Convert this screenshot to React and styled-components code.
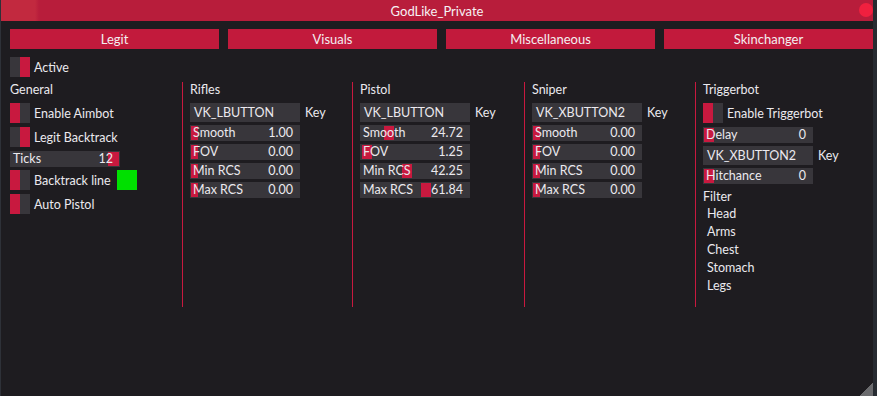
import React from 'react';
import styled, { createGlobalStyle } from 'styled-components';

const GlobalStyle = createGlobalStyle`
  html, body {
    margin: 0;
    padding: 0;
    background: #272b31;
    overflow: hidden;
  }
  * {
    box-sizing: border-box;
  }
`;

const RED = '#c8193f';
const FRAME = '#38363b';

// Window shell
const Window = styled.div`
  position: relative;
  width: 873px;
  height: 100vh;
  background: #1e1c20;
  border-left: 1px solid #2e3138;
  font-family: "Lato", "Open Sans", sans-serif;
  font-size: 12.5px;
  color: #ebe9ee;
  display: flex;
  flex-direction: column;
`;

const TitleBar = styled.div`
  height: 21px;
  flex: none;
  position: relative;
  display: flex;
  align-items: center;
  justify-content: center;
  background: linear-gradient(90deg, #c2293f 0px, #c2293f 34px, #b81d3b 38px, #b81d3b 100%);
  color: #f6f2f4;
  font-size: 13px;
`;

const CloseDot = styled.span`
  position: absolute;
  right: 0px;
  top: 3px;
  width: 14px;
  height: 14px;
  border-radius: 50%;
  background: #f0203f;
`;

const Body = styled.div`
  padding: 8px 0 0 9px;
  display: flex;
  flex-direction: column;
`;

const TabRow = styled.div`
  display: grid;
  grid-template-columns: repeat(4, 209px);
  column-gap: 9px;
`;

const Tab = styled.div`
  height: 20px;
  background: #c21a3c;
  color: #f4eef0;
  font-size: 13px;
  display: flex;
  align-items: center;
  justify-content: center;
`;

const Columns = styled.div`
  display: flex;
  margin-top: 5px;
`;

const Column = styled.div`
  width: ${p => p.$w}px;
  flex: none;
  display: flex;
  flex-direction: column;
  padding-left: ${p => (p.$line ? 7 : 0)}px;
  border-left: ${p => (p.$line ? `1px solid ${RED}` : 'none')};
  height: ${p => (p.$line ? '225px' : 'auto')};
  align-self: flex-start;
`;

const Header = styled.div`
  line-height: 15px;
  height: 16px;
  margin-bottom: 5px;
`;

const CheckRow = styled.div`
  display: flex;
  align-items: center;
  height: 20px;
  margin-bottom: ${p => p.$mb ?? 4}px;
`;

const Toggle = styled.div`
  width: 20px;
  height: 20px;
  flex: none;
  display: flex;
  background: ${FRAME};
  margin-right: 4px;

  &::before {
    content: '';
    width: 10px;
    height: 100%;
    background: ${RED};
    margin-left: ${p => (p.$on ? '10px' : '0')};
  }
`;

const ColorSwatch = styled.div`
  width: 20px;
  height: 20px;
  background: #00e000;
  margin-left: 6px;
`;

const Slider = styled.div`
  position: relative;
  width: 110px;
  height: 16px;
  margin-bottom: 3px;
  background: ${FRAME};
  display: flex;
  align-items: center;
  justify-content: space-between;
  padding: 0 7px 0 3px;
  line-height: 16px;
  flex: none;
`;

const Grab = styled.div`
  position: absolute;
  top: 1px;
  bottom: 1px;
  width: ${p => p.$w}px;
  background: ${RED};
`;

const SliderText = styled.span`
  position: relative;
`;

const KeyRow = styled.div`
  display: flex;
  align-items: center;
  margin-bottom: 3px;
`;

const KeyBox = styled.div`
  width: 110px;
  height: 19px;
  background: ${FRAME};
  padding-left: 4px;
  display: flex;
  align-items: center;
`;

const KeyLabel = styled.span`
  margin-left: 5px;
`;

const FilterTitle = styled.div`
  line-height: 17px;
  margin-top: 1px;
`;

const FilterItem = styled.div`
  line-height: 18px;
  padding-left: 4px;
`;

const ResizeGrip = styled.div`
  position: absolute;
  right: 0;
  bottom: 0;
  width: 14px;
  height: 14px;
  background: linear-gradient(135deg, transparent 50%, #6b6b6e 50%);
`;

const SliderField = ({ label, value, pos, w = 10 }) => (
  <Slider>
    <Grab $w={w} style={{ left: pos }} />
    <SliderText>{label}</SliderText>
    <SliderText>{value}</SliderText>
  </Slider>
);

const weaponCols = [
  {
    name: 'Rifles', w: 170, key: 'VK_LBUTTON',
    rows: [['Smooth', '1.00', 1, 7], ['FOV', '0.00', 1, 7], ['Min RCS', '0.00', 1, 7], ['Max RCS', '0.00', 1, 7]],
  },
  {
    name: 'Pistol', w: 172, key: 'VK_LBUTTON',
    rows: [['Smooth', '24.72', 24, 10], ['FOV', '1.25', 2, 10], ['Min RCS', '42.25', 42, 10], ['Max RCS', '61.84', 61, 10]],
  },
  {
    name: 'Sniper', w: 171, key: 'VK_XBUTTON2',
    rows: [['Smooth', '0.00', 1, 7], ['FOV', '0.00', 1, 7], ['Min RCS', '0.00', 1, 7], ['Max RCS', '0.00', 1, 7]],
  },
];

const App = () => (
  <>
    <GlobalStyle />
    <Window>
      <TitleBar>
        GodLike_Private
        <CloseDot />
      </TitleBar>
      <Body>
        <TabRow>
          <Tab>Legit</Tab>
          <Tab>Visuals</Tab>
          <Tab>Miscellaneous</Tab>
          <Tab>Skinchanger</Tab>
        </TabRow>

        <CheckRow style={{ marginTop: 8 }} $mb={0}>
          <Toggle $on />
          Active
        </CheckRow>

        <Columns>
          <Column $w={172}>
            <Header>General</Header>
            <CheckRow><Toggle />Enable Aimbot</CheckRow>
            <CheckRow><Toggle $on />Legit Backtrack</CheckRow>
            <SliderField label="Ticks" value="12" pos={98} w={11} />
            <CheckRow><Toggle />Backtrack line<ColorSwatch /></CheckRow>
            <CheckRow><Toggle />Auto Pistol</CheckRow>
          </Column>

          {weaponCols.map(col => (
            <Column key={col.name} $w={col.w} $line>
              <Header>{col.name}</Header>
              <KeyRow>
                <KeyBox>{col.key}</KeyBox>
                <KeyLabel>Key</KeyLabel>
              </KeyRow>
              {col.rows.map(([label, value, pos, w]) => (
                <SliderField key={label} label={label} value={value} pos={pos} w={w} />
              ))}
            </Column>
          ))}

          <Column $w={178} $line>
            <Header>Triggerbot</Header>
            <CheckRow><Toggle />Enable Triggerbot</CheckRow>
            <SliderField label="Delay" value="0" pos={1} w={10} />
            <KeyRow>
              <KeyBox>VK_XBUTTON2</KeyBox>
              <KeyLabel>Key</KeyLabel>
            </KeyRow>
            <SliderField label="Hitchance" value="0" pos={1} w={10} />
            <FilterTitle>Filter</FilterTitle>
            <FilterItem>Head</FilterItem>
            <FilterItem>Arms</FilterItem>
            <FilterItem>Chest</FilterItem>
            <FilterItem>Stomach</FilterItem>
            <FilterItem>Legs</FilterItem>
          </Column>
        </Columns>
      </Body>
      <ResizeGrip />
    </Window>
  </>
);

export default App;
